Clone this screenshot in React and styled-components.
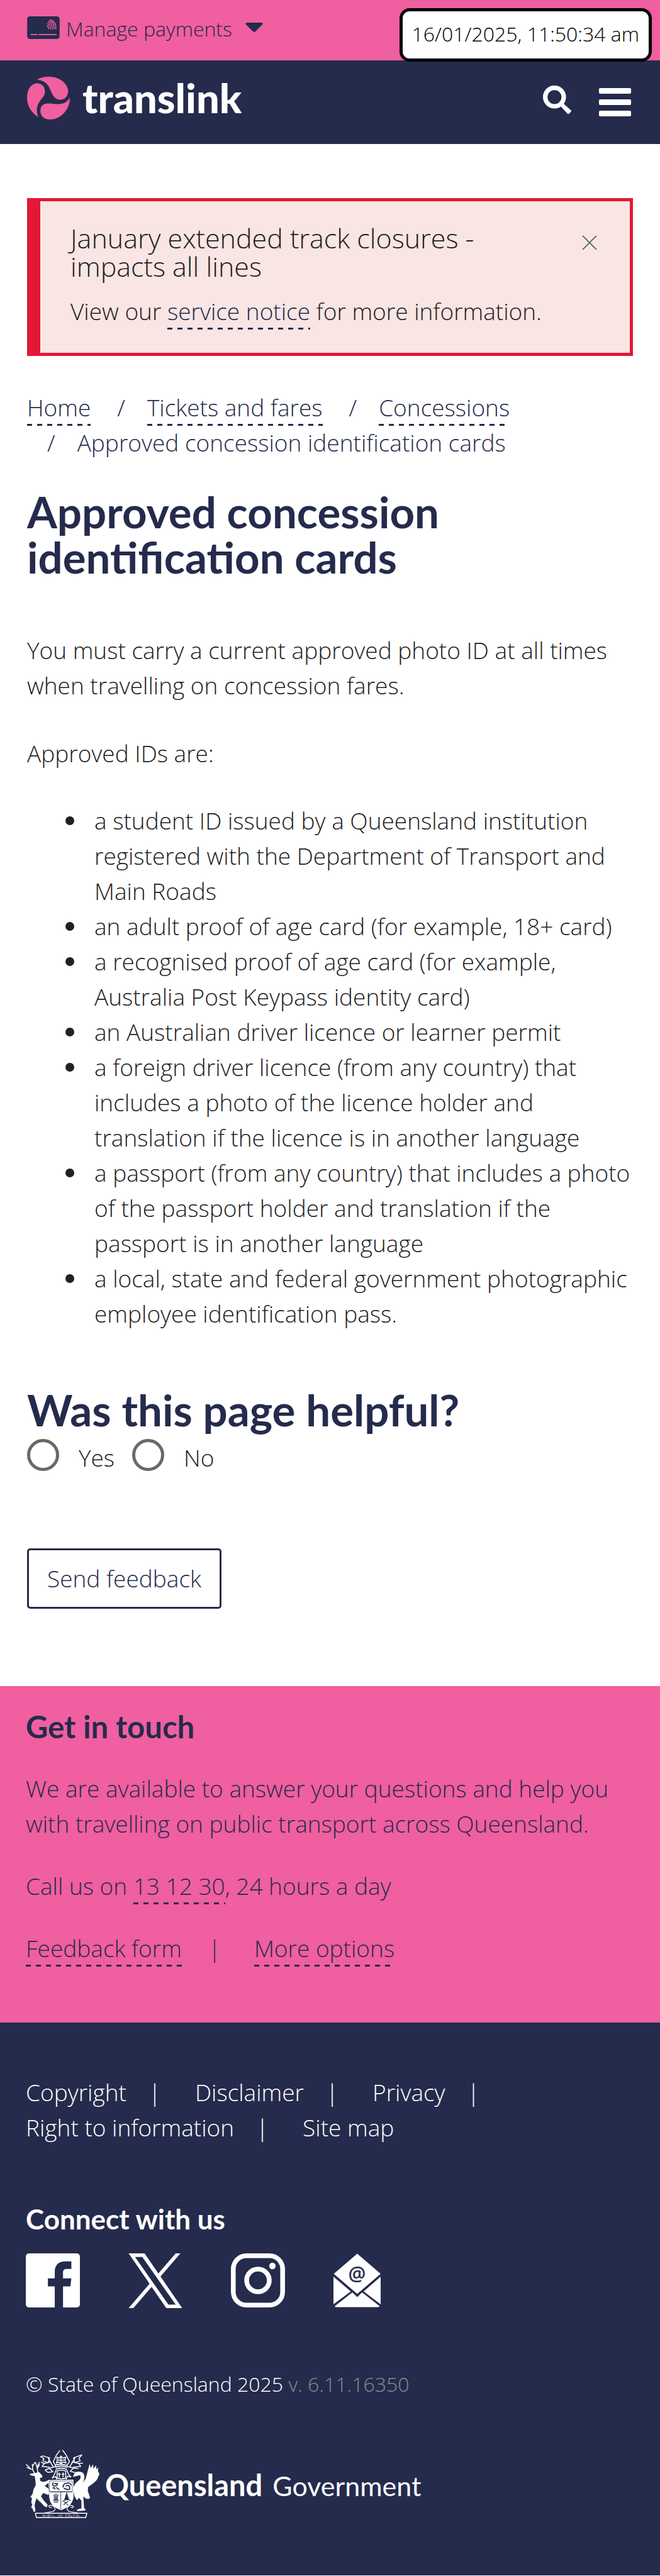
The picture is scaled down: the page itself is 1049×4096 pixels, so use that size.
import React from "react";
import styled, { createGlobalStyle } from "styled-components";

const navy = "#252b4c";
const pink = "#f05fa0";
const ink = "#212121";

const GlobalStyle = createGlobalStyle`
  *, *::before, *::after { box-sizing: border-box; }
  body {
    margin: 0;
    background: #fff;
    color: ${ink};
    font: 300 37px/56px "Open Sans", sans-serif;
  }
  h1, h2, h3, p, ul, ol { margin: 0; padding: 0; }
  ul, ol { list-style: none; }
  button { font: inherit; color: inherit; background: none; border: 0; padding: 0; cursor: pointer; }
  svg { display: block; flex: none; }
`;

const TopBar = styled.div`
  display: flex;
  align-items: center;
  height: 96px;
  padding: 0 43px 8px;
  background: ${pink};
  color: ${navy};
`;

const ManageButton = styled.button`
  display: flex;
  align-items: center;
  font-size: 32px;
  line-height: 48px;
`;

const ManageLabel = styled.span`
  padding: 4px 21px 0 10px;
`;

const Timestamp = styled.time`
  position: absolute;
  top: 13px;
  right: 13px;
  height: 85px;
  padding: 0 15px;
  border: 5px solid #000;
  border-radius: 16px;
  background: #fff;
  color: #000;
  font-size: 32px;
  line-height: 72px;
  white-space: nowrap;
`;

const Header = styled.header`
  display: flex;
  align-items: center;
  justify-content: space-between;
  height: 133px;
  padding: 0 46px 8px 43px;
  background: ${navy};
  color: #fff;
`;

const Brand = styled.a`
  display: flex;
  align-items: center;
  gap: 20px;
  color: inherit;
  text-decoration: none;
`;

const BrandName = styled.span`
  padding-bottom: 8px;
  font: 900 65px/62px Lato, sans-serif;
`;

const HeaderActions = styled.div`
  display: flex;
  align-items: center;
  gap: 44px;
`;

const Main = styled.main`
  padding: 86px 43px 123px;
`;

const Alert = styled.section`
  display: flex;
  align-items: flex-start;
  gap: 10px;
  padding: 36px 52px 38px 48px;
  border: 5px solid #e31836;
  border-left-width: 21px;
  background: #f9e5e3;
`;

const AlertBody = styled.div`
  flex: 1;
`;

const AlertTitle = styled.h2`
  margin-bottom: 21px;
  font-weight: 300;
  font-size: 43px;
  line-height: 45px;
`;

const CloseButton = styled.button`
  padding-top: 18px;
`;

const DashedLink = styled.a`
  padding-bottom: 4px;
  color: ${navy};
  text-decoration: none;
  background: repeating-linear-gradient(90deg, ${navy} 0 8px, transparent 8px 16px) left bottom / 100% 3px no-repeat;
`;

const Breadcrumbs = styled.ol`
  display: flex;
  flex-wrap: wrap;
  column-gap: 10px;
  margin-top: 54px;
  color: ${navy};
`;

const Crumb = styled.li`
  & + &::before {
    content: "/";
    padding: 0 35px 0 32px;
  }
`;

const Heading = styled.h1`
  margin-top: ${(p) => p.$above}px;
  color: ${navy};
  font: 700 69px/72px Lato, sans-serif;
`;

const TitleText = styled.span`
  display: block;
  max-width: 820px;
`;

const Intro = styled.div`
  display: grid;
  gap: 52px;
  margin-top: 84px;
`;

const IdList = styled.ul`
  margin-top: 51px;
  padding-left: 107px;
`;

const IdItem = styled.li`
  position: relative;
  &::before {
    content: "";
    position: absolute;
    left: -46px;
    top: 21px;
    width: 14px;
    height: 14px;
    border-radius: 50%;
    background: ${ink};
  }
`;

const Choices = styled.div`
  display: flex;
  gap: 28px;
  margin: 10px 0 114px;
`;

const Choice = styled.label`
  display: flex;
  gap: 31px;
  line-height: 60px;
`;

const Radio = styled.input`
  appearance: none;
  width: 51px;
  height: 51px;
  margin: 0;
  border: 5px solid #696969;
  border-radius: 50%;
  background: #fff;
  &:checked { background: ${navy}; box-shadow: inset 0 0 0 6px #fff; }
`;

const SendButton = styled.button`
  display: block;
  height: 96px;
  padding: 0 29px;
  border: 3px solid ${navy};
  border-radius: 5px;
  color: ${navy};
`;

const Contact = styled.section`
  display: grid;
  gap: 43px;
  padding: 36px 41px 90px;
  background: ${pink};
  color: ${navy};
`;

const ContactTitle = styled.h2`
  font: 700 49px/56px Lato, sans-serif;
`;

const ContactLinks = styled.div`
  display: flex;
`;

const Bar = styled.span`
  padding: 0 53px 0 42px;
`;

const Footer = styled.footer`
  padding: 83px 41px 91px;
  background: ${navy};
  color: #fff;
`;

const FooterLinks = styled.ul`
  display: flex;
  flex-wrap: wrap;
  column-gap: 54px;
`;

const FooterItem = styled.li`
  &:not(:last-child)::after {
    content: "|";
    padding-left: 35px;
  }
`;

const FooterLink = styled.a`
  color: #fff;
  text-decoration: none;
`;

const ConnectTitle = styled.h2`
  margin: 89px 0 27px;
  font: 700 44px/56px Lato, sans-serif;
`;

const SocialList = styled.ul`
  display: flex;
  gap: 77px;
`;

const Copyright = styled.p`
  margin: 97px 0 80px;
  font-size: 32px;
  line-height: 48px;
`;

const Version = styled.span`
  color: #8c8c8c;
`;

const Government = styled.a`
  display: flex;
  align-items: center;
  gap: 9px;
  color: #fff;
  text-decoration: none;
`;

const GovernmentName = styled.span`
  padding-top: 4px;
  font: 400 43px/56px Lato, sans-serif;
  strong { margin-right: 5px; font-size: 47px; font-weight: 700; }
`;

const CardIcon = () => (
  <svg width="52" height="36" viewBox="28 27 176 123" aria-hidden="true">
    <rect x="28" y="27" width="176" height="123" rx="15" fill={navy} />
    <g fill="none" stroke={pink} strokeWidth="5" strokeLinecap="round">
      <path d="M48 126H82M93 126H185" strokeWidth="6" />
      <path d="M135 79Q146 84 145 96M138 68Q157 75 155 96M141 60Q168 69 165 96M145 52Q178 62 174 96M152 45Q188 57 183 96" />
    </g>
  </svg>
);

const Caret = () => (
  <svg width="28" height="16" viewBox="0 0 28 16" aria-hidden="true">
    <path d="M2 0H26Q29 1 27 3L16 14Q14 16 12 14L1 3Q-1 1 2 0Z" fill={navy} />
  </svg>
);

const TranslinkMark = () => (
  <svg width="68" height="74" viewBox="24 350 232 252" aria-hidden="true">
    <g fill={pink}>
      <path d="M79 367C104 347 165 342 202 364C236 384 251 415 246 437C241 464 222 476 199 474C177 472 165 455 154 429C140 395 124 369 79 367Z" />
      <path d="M86 569C50 548 24 510 24 465C24 420 45 387 78 386C105 386 122 405 121 432C119 458 103 466 88 491C72 518 75 545 86 569Z" />
      <path d="M255 462C259 500 237 545 200 567C175 583 140 586 118 575C97 562 92 535 100 515C108 498 125 493 150 495C195 501 238 502 255 462Z" />
    </g>
  </svg>
);

const SearchIcon = () => (
  <svg width="45" height="45" viewBox="121 72 150 150" aria-hidden="true">
    <circle cx="182" cy="133" r="49" fill="none" stroke="#fff" strokeWidth="24" />
    <path d="M230 168L269 203Q273 207 268 212L260 220Q255 225 250 220L218 185V173Z" fill="#fff" />
  </svg>
);

const MenuIcon = () => (
  <svg width="51" height="52" viewBox="0 0 51 52" fill="#fff" aria-hidden="true">
    <rect y="7" width="51" height="9" rx="2" />
    <rect y="25" width="51" height="9" rx="2" />
    <rect y="43" width="51" height="9" rx="2" />
  </svg>
);

const CloseIcon = () => (
  <svg width="24" height="26" viewBox="0 0 24 26" fill="none" strokeWidth="2" aria-hidden="true">
    <path d="M1 3L23 25M23 3L1 25" stroke="#fff" />
    <path d="M1 1L23 23M23 1L1 23" stroke="#696969" />
  </svg>
);

const FacebookIcon = () => (
  <svg width="86" height="86" viewBox="0 0 85 85" aria-hidden="true">
    <rect width="85" height="85" rx="5" fill="#fff" />
    <path d="M45.5 85V52H34.7V39.3H45.5V29C45.5 18 52 12.7 62 12.7H71.6V24.5H65C60.5 24.5 58.5 26 58.5 30V39.3H71.6L70 52H58.5V85Z" fill={navy} />
  </svg>
);

const XIcon = () => (
  <svg width="86" height="87" viewBox="0 0 1200 1227" aria-hidden="true">
    <path fill="#fff" d="M714.163 519.284L1160.89 0H1055.03L667.137 450.887L357.328 0H0L468.492 681.821L0 1226.37H105.866L515.491 750.218L842.672 1226.37H1200L714.137 519.284H714.163ZM569.165 687.828L521.697 619.934L144.011 79.6944H306.615L611.412 515.685L658.88 583.579L1055.08 1150.3H892.476L569.165 687.854V687.828Z" />
  </svg>
);

const InstagramIcon = () => (
  <svg width="86" height="86" viewBox="0 0 86 86" fill="none" stroke="#fff" strokeWidth="7.5" aria-hidden="true">
    <rect x="3.8" y="3.8" width="78.4" height="78.4" rx="21" />
    <circle cx="43" cy="43" r="18" />
    <circle cx="66" cy="20" r="5.2" fill="#fff" stroke="none" />
  </svg>
);

const MailIcon = () => (
  <svg width="75" height="86" viewBox="0 0 75 85" aria-hidden="true">
    <g fill="#fff">
      <path d="M37.8 0L75 32L37.8 64L.5 32Z" />
      <path d="M0 36.5L27.5 60L0 80.5ZM75 36.5L48 60L75 80.5Z" />
      <path d="M30 61.5L37.8 69L45.5 61.5L73.5 83.5Q72 85 70 85H5Q3 85 2 83.5Z" />
    </g>
    <text x="37.5" y="42" textAnchor="middle" fontFamily="Open Sans, sans-serif" fontSize="31" fontWeight="600" fill={navy}>@</text>
  </svg>
);

const Crest = () => (
  <svg width="117" height="109" viewBox="25 32 393 366" aria-hidden="true">
    <g fill="#fff">
      <path d="M68 158L96 152L114 172L112 181L100 183L103 200Q120 210 148 193L150 207L126 226L146 240L150 262L146 275L118 264L106 281L122 305L141 326L139 339L126 337L106 315L88 300L84 290L76 310L72 330L77 362L66 364L62 348L54 342L60 322L54 318L58 288L48 287L62 266L66 245L78 222L76 196L72 172L60 172L46 166L48 161Z" />
      <path d="M284 160Q292 146 314 150Q338 151 338 178Q338 196 326 212L344 190L354 152L366 108L372 130L384 110L386 134L400 116L402 138L412 128L410 148L418 160L412 178L404 194L390 208L372 222L358 232L356 252L368 288L362 296L346 294L332 282L336 344L345 352L340 358L298 360L300 352L322 346L322 306L310 290L298 302L284 280L278 240Q282 216 304 200Q320 188 318 174Q312 166 300 172L276 178Z" />
    </g>
    <g fill="none" stroke="#fff" strokeWidth="5" strokeLinecap="round" strokeLinejoin="round">
      <path d="M70 156L62 140L32 128M50 134L28 112M62 140L60 112M62 120L74 100M90 154L86 134L78 102M86 134L98 112M86 122L98 100" />
      <path d="M206 38L188 62L172 96L184 118M222 36L240 60L258 96L244 118" />
      <path d="M104 70L118 66L152 76L144 102L116 92L122 80ZM108 100L124 106L156 98L170 122M124 106L112 122L150 126M144 76L160 104M324 60L308 66L280 76L286 102L316 92L308 80ZM328 104L308 106L276 98L260 122M308 106L318 122L280 126M288 76L270 104" />
      <path d="M128 142L150 132L170 150L144 154ZM304 134L280 130L262 148L286 154M150 132L186 122M280 130L246 122" />
      <path d="M190 72L204 78L213 66L224 78L238 72L234 88L240 104L224 98L213 108L202 98L188 104L194 88ZM213 66V108M194 88H234" />
      <path d="M186 114Q214 106 244 116M186 126Q214 114 244 126M188 136Q214 126 242 136" strokeWidth="6" />
      <path d="M186 142Q178 170 166 184L184 176L190 190M244 142Q252 166 266 178L248 174L240 190" />
      <path d="M192 146Q214 138 238 146V184Q216 192 192 184ZM204 156V178M198 164H210M224 156V178M218 164H230" />
      <path d="M148 196L278 194V290Q270 336 213 354Q156 336 152 290Z" fill="#fff" strokeWidth="3" />
      <path d="M172 362Q190 352 172 334Q160 326 148 332Q150 346 162 340M172 362Q150 366 128 370M256 362Q236 350 254 334Q266 324 280 336Q276 346 266 340M256 362Q280 366 300 370" strokeWidth="4" />
      <path d="M76 372H351L345 395H82Z" strokeWidth="5" />
    </g>
    <g fill="none" stroke={navy} strokeWidth="5" strokeLinecap="round">
      <path d="M153 200H273V256H153Z" strokeWidth="2" />
      <path d="M212 258V350M154 258H272" strokeWidth="3" />
      <path d="M170 210Q164 224 176 226Q196 226 194 212M178 214H188M170 238Q176 230 180 242M190 236L202 244" strokeWidth="6" />
      <path d="M224 232Q226 212 242 212Q264 206 266 222M240 226Q256 218 258 234Q266 244 250 246L230 240" strokeWidth="6" />
      <path d="M186 268V298M176 274L180 298M196 274L192 298M172 302H200M176 312H196" />
      <path d="M243 264L232 300H254Z" fill={navy} strokeWidth="3" />
      <path d="M222 308Q242 292 264 304M230 310L250 328M250 308L228 326" strokeWidth="4" />
    </g>
    <path d="M116 390V380L124 390V380M132 380V390M142 380H150V390H142ZM158 380V390M164 380L178 390M198 390L204 380L208 390M212 380H220M216 380V390M238 390V380H246M252 390V380H258V390M266 380V390H274M280 390V380H288M294 380V390M300 390V380L314 390" fill="none" stroke="#fff" strokeWidth="2" />
  </svg>
);

const crumbs = ["Home", "Tickets and fares", "Concessions"];

const ids = [
  "a student ID issued by a Queensland institution registered with the Department of Transport and Main Roads",
  "an adult proof of age card (for example, 18+ card)",
  "a recognised proof of age card (for example, Australia Post Keypass identity card)",
  "an Australian driver licence or learner permit",
  "a foreign driver licence (from any country) that includes a photo of the licence holder and translation if the licence is in another language",
  "a passport (from any country) that includes a photo of the passport holder and translation if the passport is in another language",
  "a local, state and federal government photographic employee identification pass.",
];

const footerLinks = ["Copyright", "Disclaimer", "Privacy", "Right to information", "Site map"];

const socials = [
  ["Facebook", FacebookIcon],
  ["X", XIcon],
  ["Instagram", InstagramIcon],
  ["Email", MailIcon],
];

export default function App() {
  return (
    <>
      <GlobalStyle />
      <TopBar>
        <ManageButton type="button">
          <CardIcon />
          <ManageLabel>Manage payments</ManageLabel>
          <Caret />
        </ManageButton>
        <Timestamp>16/01/2025, 11:50:34 am</Timestamp>
      </TopBar>
      <Header>
        <Brand href="#">
          <TranslinkMark />
          <BrandName>translink</BrandName>
        </Brand>
        <HeaderActions>
          <button type="button" aria-label="Search"><SearchIcon /></button>
          <button type="button" aria-label="Menu"><MenuIcon /></button>
        </HeaderActions>
      </Header>

      <Main>
        <Alert>
          <AlertBody>
            <AlertTitle>January extended track closures - impacts all lines</AlertTitle>
            <p>View our <DashedLink href="#">service notice</DashedLink> for more information.</p>
          </AlertBody>
          <CloseButton type="button" aria-label="Close"><CloseIcon /></CloseButton>
        </Alert>

        <nav aria-label="Breadcrumb">
          <Breadcrumbs>
            {crumbs.map((name) => (
              <Crumb key={name}><DashedLink href="#">{name}</DashedLink></Crumb>
            ))}
            <Crumb>Approved concession identification cards</Crumb>
          </Breadcrumbs>
        </nav>

        <Heading $above={46}><TitleText>Approved concession identification cards</TitleText></Heading>

        <Intro>
          <p>You must carry a current approved photo ID at all times when travelling on concession fares.</p>
          <p>Approved IDs are:</p>
        </Intro>
        <IdList>
          {ids.map((text) => <IdItem key={text}>{text}</IdItem>)}
        </IdList>

        <form>
          <Heading as="h2" $above={89} id="helpful">Was this page helpful?</Heading>
          <Choices role="radiogroup" aria-labelledby="helpful">
            {["Yes", "No"].map((answer) => (
              <Choice key={answer} htmlFor={answer}>
                <Radio type="radio" name="helpful" id={answer} value={answer} />
                {answer}
              </Choice>
            ))}
          </Choices>
          <SendButton type="button">Send feedback</SendButton>
        </form>
      </Main>

      <Contact>
        <ContactTitle>Get in touch</ContactTitle>
        <p>We are available to answer your questions and help you with travelling on public transport across Queensland.</p>
        <p>Call us on <DashedLink href="#">13 12 30</DashedLink>, 24 hours a day</p>
        <ContactLinks>
          <span><DashedLink href="#">Feedback form</DashedLink></span>
          <Bar>|</Bar>
          <span><DashedLink href="#">More options</DashedLink></span>
        </ContactLinks>
      </Contact>

      <Footer>
        <FooterLinks>
          {footerLinks.map((name) => (
            <FooterItem key={name}><FooterLink href="#">{name}</FooterLink></FooterItem>
          ))}
        </FooterLinks>
        <ConnectTitle>Connect with us</ConnectTitle>
        <SocialList>
          {socials.map(([name, Icon]) => (
            <li key={name}><FooterLink href="#" aria-label={name}><Icon /></FooterLink></li>
          ))}
        </SocialList>
        <Copyright>© State of Queensland 2025 <Version>v. 6.11.16350</Version></Copyright>
        <Government href="#">
          <Crest />
          <GovernmentName><strong>Queensland</strong> Government</GovernmentName>
        </Government>
      </Footer>
    </>
  );
}
